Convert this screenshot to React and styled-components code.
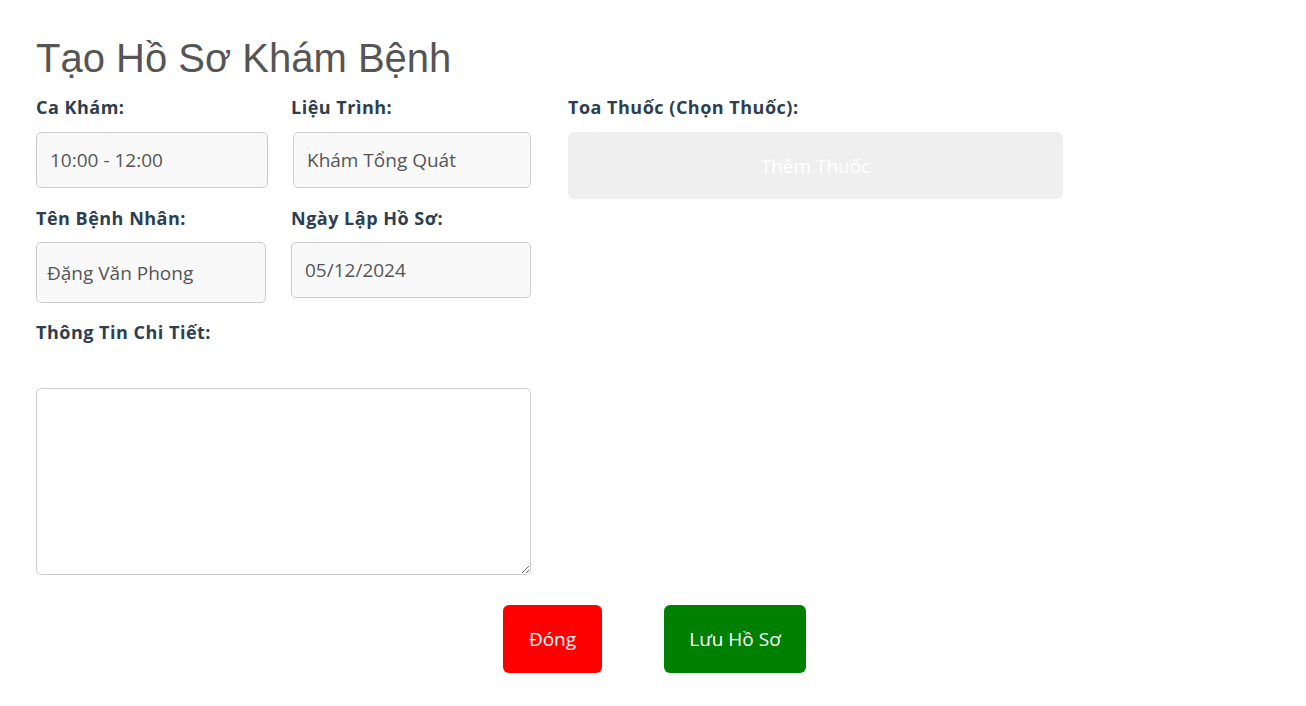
import React from 'react'
import styled, { createGlobalStyle } from "styled-components"

const GlobalStyle = createGlobalStyle`
body {
    margin: 0;
    background: #ffffff;
    font-family: "Open Sans", "Noto Sans", sans-serif;
}
`

const Modal = styled.div`
background-color: #ffffff;
width: 1306px;
height: 706px;
box-sizing: border-box;
padding: 35px 36px 0 36px;

h2 {
    margin: 0 0 15px 0;
    font-family: "Liberation Sans", Arial, sans-serif;
    font-weight: normal;
    font-size: 40px;
    line-height: 46px;
    color: #555555;
}
`

const Body = styled.div`
display: flex;
flex-direction: row;
align-items: flex-start;
gap: 37px;
`

const LeftColumn = styled.div`
width: 495px;
display: grid;
grid-template-columns: 232px 240px;
column-gap: 23px;
`

const Field = styled.div`
display: flex;
flex-direction: column;
margin-bottom: ${props => props.$mb ?? 19}px;
`

const Wide = styled(Field)`
grid-column: 1 / span 2;
`

const Label = styled.label`
font-size: 18px;
line-height: 23px;
font-weight: 700;
letter-spacing: 0.5px;
color: #2c3e50;
margin-bottom: ${props => props.$mb ?? 13}px;
`

const Input = styled.input`
box-sizing: border-box;
width: ${props => props.$w ? props.$w + "px" : "100%"};
height: ${props => props.$h || 56}px;
margin-left: ${props => props.$ml || 0}px;
padding: 0 0 0 ${props => props.$pl || 13}px;
border: 1px solid #cccccc;
border-radius: 5px;
background-color: #f9f9f9;
font-family: "Open Sans", "Noto Sans", sans-serif;
font-size: 19px;
color: #555555;
outline: none;
`

const TextArea = styled.textarea`
box-sizing: border-box;
width: 495px;
height: 187px;
border: 1px solid #cccccc;
border-radius: 5px;
background: #ffffff;
resize: vertical;
font-family: "Open Sans", "Noto Sans", sans-serif;
font-size: 16px;
outline: none;
`

const RightColumn = styled.div`
width: 495px;
display: flex;
flex-direction: column;
`

const AddButton = styled.button`
height: 67px;
width: 100%;
border: none;
border-radius: 6px;
background-color: #efefef;
color: #ffffff;
font-family: "Open Sans", "Noto Sans", sans-serif;
font-size: 19px;
cursor: pointer;
`

const Actions = styled.div`
display: flex;
justify-content: center;
gap: 62px;
margin: 30px 0 0 3px;
`

const ActionButton = styled.button`
height: 68px;
width: ${props => props.$w}px;
padding: 0;
border: none;
border-radius: 6px;
background-color: ${props => props.$bg};
color: #ffffff;
font-family: "Open Sans", "Noto Sans", sans-serif;
font-size: 19px;
cursor: pointer;
`

const App = () => {
    return (
        <>
            <GlobalStyle />
            <Modal>
                <h2>Tạo Hồ Sơ Khám Bệnh</h2>
                <Body>
                    <LeftColumn>
                        <Field>
                            <Label>Ca Khám:</Label>
                            <Input defaultValue="10:00 - 12:00" readOnly />
                        </Field>
                        <Field>
                            <Label>Liệu Trình:</Label>
                            <Input defaultValue="Khám Tổng Quát" readOnly $w={238} $ml={2} />
                        </Field>
                        <Field $mb={18}>
                            <Label $mb={12}>Tên Bệnh Nhân:</Label>
                            <Input defaultValue="Đặng Văn Phong" readOnly $w={230} $h={61} $pl={10} />
                        </Field>
                        <Field $mb={18}>
                            <Label $mb={12}>Ngày Lập Hồ Sơ:</Label>
                            <Input defaultValue="05/12/2024" readOnly />
                        </Field>
                        <Wide $mb={0}>
                            <Label $mb={44}>Thông Tin Chi Tiết:</Label>
                            <TextArea />
                        </Wide>
                    </LeftColumn>
                    <RightColumn>
                        <Label>Toa Thuốc (Chọn Thuốc):</Label>
                        <AddButton>Thêm Thuốc</AddButton>
                    </RightColumn>
                </Body>
                <Actions>
                    <ActionButton $bg="#ff0000" $w={99}>Đóng</ActionButton>
                    <ActionButton $bg="#008000" $w={142}>Lưu Hồ Sơ</ActionButton>
                </Actions>
            </Modal>
        </>
    )
}

export default App
